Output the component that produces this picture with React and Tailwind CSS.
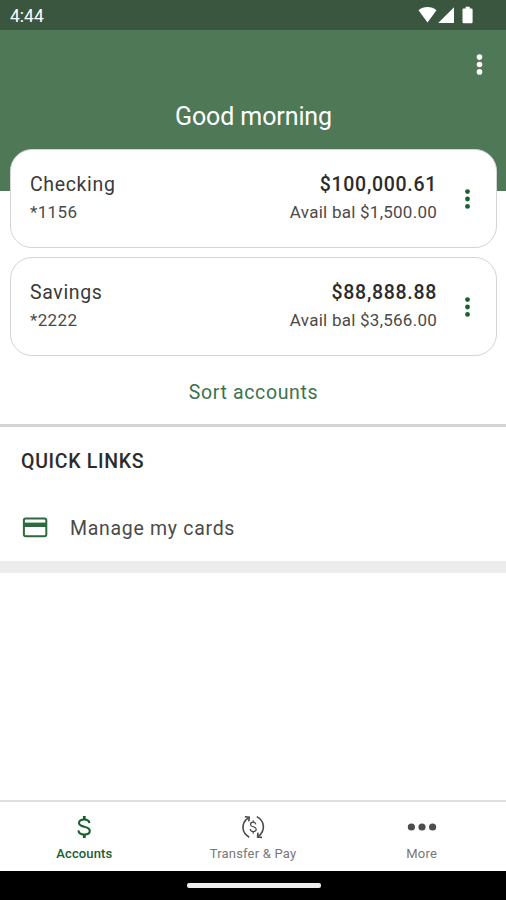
import React from 'react';

const accounts = [
  { name: 'Checking', number: '*1156', balance: '$100,000.61', available: '$1,500.00' },
  { name: 'Savings', number: '*2222', balance: '$88,888.88', available: '$3,566.00' },
];

const StatusBar = () => (
  <div className="flex h-[30px] items-center justify-between bg-[#3a563e] pl-[10px] pr-[33px]">
    <span className="pt-[2px] text-[17.5px] leading-[28px] text-white">4:44</span>
    <svg className="h-[18px] w-[55px]" viewBox="0 0 55 18" fill="#fff">
      <path d="M0.5 4.2C5.5 -0.2 13.5 -0.2 18.5 4.2L9.5 16.5Z" />
      <path d="M20.2 17L36 1.2V17Z" />
      <path d="M45.6 2.6H47.6V0.8H51.8V2.6H53.6Q54.6 2.6 54.6 3.8V16Q54.6 17.2 53.6 17.2H45.6Q44.5 17.2 44.5 16V3.8Q44.5 2.6 45.6 2.6Z" />
    </svg>
  </div>
);

const AccountCard = ({ account }) => (
  <div className="flex h-[99px] items-start rounded-[22px] border-[1.5px] border-[#d4d4d4] bg-white pl-[19px] pr-[26px]">
    <div className="flex-1 pt-[21px]">
      <p className="text-[19.5px] leading-[28px] tracking-[0.65px] text-[#3a3a3a]">{account.name}</p>
      <p className="text-[17px] leading-[26px] tracking-[0.35px] text-[#4a4a4a]">{account.number}</p>
    </div>
    <div className="pt-[21px] text-right">
      <p className="text-[19.5px] font-medium leading-[28px] tracking-[0.7px] text-[#2b2b2b]">{account.balance}</p>
      <p className="text-[17px] leading-[26px] tracking-[0.25px] text-[#4a4a4a]">Avail bal {account.available}</p>
    </div>
    <button className="ml-[27px] mt-[39px]">
      <svg className="h-[20px] w-[6px]" viewBox="0 0 6 20" fill="#17602f">
        <circle cx="3.5" cy="2.6" r="2.4" />
        <circle cx="3.5" cy="10" r="2.4" />
        <circle cx="3.5" cy="17.4" r="2.4" />
      </svg>
    </button>
  </div>
);

const DollarIcon = () => (
  <svg className="h-[24px] w-[16px]" viewBox="0 0 16 24" fill="none" stroke="#17602f" strokeWidth="2.1">
    <path d="M13.4 8.2C13.2 5.8 11.2 4.5 8.2 4.5C5 4.5 3 5.8 3 8C3 13 13.8 10.4 13.8 15.8C13.8 18.2 11.6 19.6 8.4 19.6C4.9 19.6 2.7 18.2 2.4 15.4" />
    <path d="M8.3 1V4.5M8.3 19.6V23" strokeWidth="2.8" />
  </svg>
);

const TransferIcon = () => (
  <svg className="h-[24px] w-[24px]" viewBox="0 0 24 24" fill="none" stroke="#4a4a4a" strokeWidth="1.6">
    <path d="M7.3 2.8C3.2 5.6 1.7 9.4 2 13.2C2.3 16.8 4.6 20 8.2 22.2" />
    <path d="M3.8 1.8L8.2 2.2L7.8 6.4" />
    <path d="M15.8 1.6C19.8 3.9 22.2 7.4 22.4 11C22.6 15 20.8 18.8 17.2 21.6" />
    <path d="M17 17.6L16.6 22.1L21 22.4" />
    <path d="M14.8 9.3C14.6 7.8 13.6 7.2 12.2 7.2C10.5 7.2 9.5 8 9.5 9.4C9.5 12.4 15.2 11 15.2 14.3C15.2 15.8 14.1 16.6 12.3 16.6C10.4 16.6 9.3 15.7 9.2 14M12.2 5.2V7.2M12.2 16.6V18.8" strokeWidth="1.2" />
  </svg>
);

const MoreIcon = () => (
  <svg className="h-[24px] w-[30px]" viewBox="0 0 30 24" fill="#4d4d4d">
    <circle cx="4.4" cy="12" r="3.6" />
    <circle cx="15" cy="12" r="3.6" />
    <circle cx="25.6" cy="12" r="3.6" />
  </svg>
);

const tabs = [
  { label: 'Accounts', icon: DollarIcon, active: true },
  { label: 'Transfer & Pay', icon: TransferIcon },
  { label: 'More', icon: MoreIcon },
];

const BottomNav = () => (
  <nav className="grid h-[71px] grid-cols-3 border-t-2 border-[#dedede] bg-white">
    {tabs.map(({ label, icon: Icon, active }) => (
      <button key={label} className="flex flex-col items-center pt-[13px]">
        <Icon />
        <span
          className={
            active
              ? 'mt-[7px] text-[13px] font-medium leading-[16px] tracking-[0.15px] text-[#17602f]'
              : 'mt-[7px] text-[13px] leading-[16px] tracking-[0.2px] text-[#777]'
          }
        >
          {label}
        </span>
      </button>
    ))}
  </nav>
);

const App = () => {
  return (
    <div className="flex h-screen flex-col overflow-hidden bg-white font-['Roboto',sans-serif]">
      <StatusBar />

      <header className="h-[161px] shrink-0 bg-[#4f7857]">
        <div className="flex justify-end pr-[23px] pt-[24px]">
          <svg className="h-[21px] w-[7px]" viewBox="0 0 7 21" fill="#fff">
            <circle cx="3.5" cy="3.1" r="2.8" />
            <circle cx="3.5" cy="10.5" r="2.8" />
            <circle cx="3.5" cy="17.9" r="2.8" />
          </svg>
        </div>
        <h1 className="mt-[26px] pl-px text-center text-[25px] leading-[32px] tracking-[-0.1px] text-white">Good morning</h1>
      </header>

      <main className="-mt-[42px] flex-1">
        <div className="flex flex-col gap-[9px] pl-[10px] pr-[9px]">
          {accounts.map((account) => (
            <AccountCard key={account.number} account={account} />
          ))}
        </div>
        <button className="block h-[68px] w-full pl-px pt-[5px] text-center text-[19.5px] leading-[28px] tracking-[0.65px] text-[#3f724e]">
          Sort accounts
        </button>

        {/* Quick links */}
        <section className="border-b-[12px] border-t-[3px] border-b-[#ececec] border-t-[#d4d4d4] px-[21px]">
          <h2 className="h-[84px] pt-[21px] text-[19.5px] font-medium leading-[28px] tracking-[0.7px] text-[#2b2b2b]">QUICK LINKS</h2>
          <div className="flex h-[50px] items-start">
            <svg className="ml-[1px] mt-[6px] h-[21px] w-[26px]" viewBox="0 0 26 21" fill="none">
              <rect x="1.9" y="1.5" width="22.4" height="17.8" rx="1.8" stroke="#2d6a3d" strokeWidth="2" />
              <path d="M2 7.8H24" stroke="#2d6a3d" strokeWidth="4.4" />
            </svg>
            <span className="ml-[22px] mt-[4px] text-[19.5px] leading-[28px] tracking-[0.7px] text-[#4a4a4a]">Manage my cards</span>
          </div>
        </section>
      </main>

      <BottomNav />

      {/* Gesture bar */}
      <div className="flex h-[29px] justify-center bg-black pl-px pt-[12px]">
        <div className="h-[5px] w-[134px] rounded-[2px] bg-[#ededed]" />
      </div>
    </div>
  );
};

export default App;
